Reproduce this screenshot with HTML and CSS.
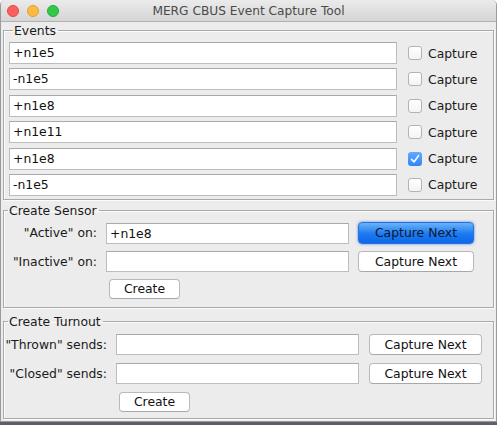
FILE: index.html
```html
<!DOCTYPE html>
<html>
<head>
<meta charset="utf-8">
<link rel="stylesheet" href="styles.css">
</head>
<body>
<div class="window">
  <div class="titlebar">
    <div class="lights">
      <span class="light red"></span>
      <span class="light yellow"></span>
      <span class="light green"></span>
    </div>
    <div class="title">MERG CBUS Event Capture Tool</div>
  </div>
  <div class="content">
    <fieldset class="panel events">
      <legend>Events</legend>
      <div class="event-row"><div class="field">+n1e5</div><div class="check"><span class="box"></span>Capture</div></div>
      <div class="event-row"><div class="field">-n1e5</div><div class="check"><span class="box"></span>Capture</div></div>
      <div class="event-row"><div class="field">+n1e8</div><div class="check"><span class="box"></span>Capture</div></div>
      <div class="event-row"><div class="field">+n1e11</div><div class="check"><span class="box"></span>Capture</div></div>
      <div class="event-row"><div class="field">+n1e8</div><div class="check"><span class="box checked"><svg viewBox="0 0 14 14" width="14" height="14"><path d="M3.6 7.4 L6 10 L10.6 3.6" fill="none" stroke="#fff" stroke-width="1.6" stroke-linecap="round" stroke-linejoin="round"/></svg></span>Capture</div></div>
      <div class="event-row"><div class="field">-n1e5</div><div class="check"><span class="box"></span>Capture</div></div>
    </fieldset>
    <fieldset class="panel sensor">
      <legend>Create Sensor</legend>
      <div class="form sensor-form">
        <span class="lbl">"Active" on:</span><div class="field">+n1e8</div><div class="btn default">Capture Next</div>
        <span class="lbl">"Inactive" on:</span><div class="field"></div><div class="btn">Capture Next</div>
        <span></span><div class="create-wrap"><div class="btn create">Create</div></div><span></span>
      </div>
    </fieldset>
    <fieldset class="panel turnout">
      <legend>Create Turnout</legend>
      <div class="form turnout-form">
        <span class="lbl">"Thrown" sends:</span><div class="field"></div><div class="btn">Capture Next</div>
        <span class="lbl">"Closed" sends:</span><div class="field"></div><div class="btn">Capture Next</div>
        <span></span><div class="create-wrap"><div class="btn create">Create</div></div><span></span>
      </div>
    </fieldset>
  </div>
</div>
<div class="desktop"></div>
</body>
</html>
```

FILE: styles.css
```css
html, body {
  margin: 0;
  padding: 0;
  background: #ffffff;
}
body {
  width: 497px;
  height: 425px;
  overflow: hidden;
  font-family: "DejaVu Sans", "Liberation Sans", sans-serif;
  font-size: 12px;
  color: #1a1a1a;
}
.window {
  width: 497px;
  height: 422px;
  box-sizing: border-box;
  background: #ececec;
  border: 1px solid #9b9b9b;
  border-top: none;
  border-radius: 5px 5px 0 0;
  overflow: hidden;
}
.desktop {
  height: 3px;
  background: #5d5e6a;
}
.titlebar {
  height: 22px;
  box-sizing: border-box;
  background: linear-gradient(#ebebeb, #d5d5d5);
  border-bottom: 1px solid #b1b1b1;
  display: flex;
  align-items: center;
  position: relative;
}
.lights {
  display: flex;
  gap: 8px;
  padding-left: 6px;
}
.light {
  width: 12px;
  height: 12px;
  border-radius: 50%;
  box-sizing: border-box;
}
.red { background: #fc605c; border: 1px solid #de4a45; }
.yellow { background: #fdbc40; border: 1px solid #de9f34; }
.green { background: #34c84a; border: 1px solid #27aa35; }
.title {
  position: absolute;
  left: 0;
  right: 0;
  text-align: center;
  color: #4a4a4a;
  font-size: 12.2px;
  line-height: 22px;
}
.content {
  padding: 0 2px 0 2px;
}
.panel {
  margin: 0;
  border: 1px solid #a9a9a9;
  box-shadow: inset 1px 1px 0 #fbfbfb, 1px 1px 0 #fbfbfb;
  padding: 0;
  min-width: 0;
}
.panel legend {
  padding: 0 2px 0 1px;
  margin-left: 4px;
  line-height: 15px;
  font-size: 12.4px;
  color: #1a1a1a;
}
.events {
  margin-top: 1px;
  padding: 4px 5px 3px 5px;
  display: flex;
  flex-direction: column;
  gap: 4.4px;
}
.event-row {
  display: flex;
  align-items: center;
  height: 22px;
}
.field {
  box-sizing: border-box;
  background: #fff;
  border: 1px solid #bdbdbd;
  border-top-color: #a9a9a9;
  height: 22px;
  line-height: 20px;
  padding-left: 3px;
  font-size: 12.4px;
  color: #111;
}
.event-row .field {
  width: 388px;
}
.check {
  display: flex;
  align-items: center;
  margin-left: 11px;
  gap: 6px;
  font-size: 12.4px;
}
.box {
  width: 14px;
  height: 14px;
  box-sizing: border-box;
  border: 1px solid #b3b3b3;
  border-radius: 3px;
  background: linear-gradient(#ffffff, #f4f4f4);
  display: inline-block;
}
.box.checked {
  border: none;
  background: linear-gradient(#62aafc, #2f86f4);
}
.box svg { display: block; }
.sensor {
  margin-top: 3px;
  padding: 4px 0 8px 0;
}
.turnout {
  margin-top: 6px;
  padding: 5px 0 6px 0;
}
.form {
  display: grid;
  align-items: center;
  row-gap: 7px;
}
.sensor-form {
  grid-template-columns: 92px 243px 116px;
  column-gap: 9px;
  padding-left: 1px;
}
.sensor-form > :nth-child(2) {
  margin-top: 1px;
}
.turnout-form {
  grid-template-columns: 103px 243px 114px;
  column-gap: 9px;
  row-gap: 8px;
}
.turnout-form .btn {
  margin-left: 1px;
}
.form .field {
  height: 21px;
}
.lbl {
  text-align: right;
  font-size: 12.4px;
  white-space: nowrap;
}
.btn {
  box-sizing: border-box;
  height: 21px;
  line-height: 19px;
  text-align: center;
  font-size: 12.4px;
  background: #ffffff;
  border: 1px solid #b9b9b9;
  border-bottom-color: #a8a8a8;
  border-radius: 4px;
  color: #111;
}
.btn.default {
  height: 22px;
  line-height: 20px;
  background: linear-gradient(#6ab3fb, #1d79f1 55%, #0b68ea);
  border: 1px solid #2a6fd6;
  color: #0c1a33;
  box-shadow: 0 0 2px 1px rgba(90, 150, 240, 0.55);
}
.create-wrap {
  padding-left: 3px;
}
.turnout-form .create-wrap .btn.create {
  margin-left: 0;
}
.btn.create {
  width: 71px;
  height: 20px;
  line-height: 18px;
}
```
